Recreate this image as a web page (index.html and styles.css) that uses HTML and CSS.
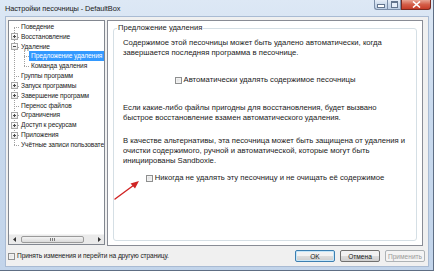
FILE: index.html
```html
<!DOCTYPE html>
<html lang="ru">
<head>
  <meta charset="UTF-8" />
  <title>Настройки песочницы - DefaultBox</title>
  <link rel="stylesheet" href="styles.css">
</head>
<body>
<div class="window">
  <div class="titlebar">
    <span class="title">Настройки песочницы - DefaultBox</span>
    <div class="controls">
      <span class="ctl ctl-min"><i class="min-glyph"></i></span>
      <span class="ctl ctl-max"><i class="max-glyph"></i></span>
      <span class="ctl ctl-close">
        <svg width="9" height="7" viewBox="0 0 9 7"><path d="M1 0.5 L8 6.5 M8 0.5 L1 6.5" stroke="#fff" stroke-width="1.6"/></svg>
      </span>
    </div>
  </div>

  <div class="client">
    <div class="main">
      <div class="tree">
        <ul class="tree-list">
          <li class="item"><span class="label">Поведение</span></li>
          <li class="item"><span class="exp plus"></span><span class="label">Восстановление</span></li>
          <li class="item"><span class="exp minus"></span><span class="label">Удаление</span></li>
          <li class="sub">
            <ul class="sub-list">
              <li class="item child"><span class="label selected">Предложение удаления</span></li>
              <li class="item child"><span class="label">Команда удаления</span></li>
            </ul>
          </li>
          <li class="item"><span class="label">Группы программ</span></li>
          <li class="item"><span class="exp plus"></span><span class="label">Запуск программы</span></li>
          <li class="item"><span class="exp plus"></span><span class="label">Завершение программ</span></li>
          <li class="item"><span class="label">Перенос файлов</span></li>
          <li class="item"><span class="exp plus"></span><span class="label">Ограничения</span></li>
          <li class="item"><span class="exp plus"></span><span class="label">Доступ к ресурсам</span></li>
          <li class="item"><span class="exp plus"></span><span class="label">Приложения</span></li>
          <li class="item"><span class="label">Учётные записи пользователей</span></li>
        </ul>
        <div class="hscroll">
          <span class="sb-btn"><svg width="3" height="5" viewBox="0 0 3 5"><path d="M3 0 L0 2.5 L3 5 Z" fill="#333"/></svg></span>
          <div class="sb-track"><span class="sb-thumb"><i></i><i></i><i></i></span></div>
          <span class="sb-btn"><svg width="3" height="5" viewBox="0 0 3 5"><path d="M0 0 L3 2.5 L0 5 Z" fill="#333"/></svg></span>
        </div>
      </div>

      <div class="page">
        <fieldset class="group">
          <legend>Предложение удаления</legend>
          <div class="group-body">
            <p class="text p1">Содержимое этой песочницы может быть удалено автоматически, когда<br>завершается последняя программа в песочнице.</p>
            <div class="check-row c1"><span class="box"></span>Автоматически удалять содержимое песочницы</div>
            <p class="text p2">Если какие-либо файлы пригодны для восстановления, будет вызвано<br>быстрое восстановление взамен автоматического удаления.</p>
            <p class="text p3">В качестве альтернативы, эта песочница может быть защищена от удаления и<br>очистки содержимого, ручной и автоматической, которые могут быть<br>инициированы Sandboxie.</p>
            <div class="check-row c2"><span class="box"></span>Никогда не удалять эту песочницу и не очищать её содержимое</div>
          </div>
        </fieldset>
      </div>
    </div>

    <div class="footer">
      <div class="check-row footer-check"><span class="box"></span>Принять изменения и перейти на другую страницу.</div>
      <div class="buttons">
        <button class="btn btn-default">OK</button>
        <button class="btn">Отмена</button>
        <button class="btn" disabled>Применить</button>
      </div>
    </div>
  </div>

  <svg class="arrow" width="30" height="24" viewBox="0 0 30 24">
    <path d="M1 22 L20 8" stroke="#d02424" stroke-width="1.4" stroke-linecap="round"/>
    <path d="M25 4 L16.5 6.5 L21 11.5 Z" fill="#d02424"/>
  </svg>
</div>
</body>
</html>
```

FILE: styles.css
```css
body {
  margin: 0;
  font-family: "Liberation Sans", Arial, sans-serif;
  background: #ffffff;
}

.window {
  width: 434px;
  height: 271px;
  box-sizing: border-box;
  position: relative;
  display: flex;
  flex-direction: column;
  background: linear-gradient(#dde8f5, #c9daee 40%, #c2d4ea);
  border-right: 1px solid #5e6e84;
  border-bottom: 1px solid #5e6e84;
}

.titlebar {
  height: 17px;
  display: flex;
  align-items: flex-start;
  justify-content: space-between;
  flex-shrink: 0;
}

.title {
  font-size: 7.4px;
  color: #1a1a1a;
  margin: 4px 0 0 5px;
  letter-spacing: -0.1px;
}

.controls {
  display: flex;
  margin-right: 2px;
}

.ctl {
  height: 10px;
  box-sizing: border-box;
  border: 1px solid #7b8ea8;
  border-top: none;
  display: flex;
  align-items: center;
  justify-content: center;
  background: linear-gradient(#e7eef7, #cbd9ea 50%, #bccde3);
}

.ctl-min {
  width: 13px;
  border-radius: 0 0 0 3px;
  border-right: none;
}

.ctl-max {
  width: 14px;
}

.ctl-close {
  width: 30px;
  border-color: #7a2a20;
  border-radius: 0 0 3px 0;
  background: linear-gradient(#e8a493, #d45e48 50%, #c63b27);
}

.min-glyph {
  width: 6px;
  height: 2px;
  margin-top: 3px;
  background: #fff;
  border: 1px solid #63758d;
}

.max-glyph {
  width: 5px;
  height: 4px;
  border: 1px solid #63758d;
  border-top-width: 2px;
  background: #e6eef8;
}

.client {
  flex: 1;
  margin: 0 5px 4px 6px;
  background: #f0f0f0;
  display: flex;
  flex-direction: column;
  box-shadow: 0 0 0 1px #a9bbd3;
}

.main {
  display: flex;
  align-items: flex-start;
  gap: 2px;
  padding: 3px 5px 0 2px;
}

/* tree */
.tree {
  width: 97px;
  height: 225px;
  box-sizing: border-box;
  border: 1px solid #828790;
  background: #fff;
  display: flex;
  flex-direction: column;
  overflow: hidden;
}

.tree-list {
  list-style: none;
  margin: 1px 0 0;
  padding: 0;
  flex: 1;
  position: relative;
  font-size: 6.6px;
  letter-spacing: -0.1px;
  color: #1a1a1a;
  white-space: nowrap;
}

.tree-list::before {
  content: "";
  position: absolute;
  left: 5px;
  top: 5px;
  height: 118px;
  border-left: 1px dotted #a0a0a0;
}

.sub-list {
  list-style: none;
  margin: 0;
  padding: 0;
  position: relative;
}

.sub-list::before {
  content: "";
  position: absolute;
  left: 15px;
  top: 0;
  height: 15px;
  border-left: 1px dotted #a0a0a0;
}

.item {
  height: 9.83px;
  display: flex;
  align-items: center;
  position: relative;
  padding-left: 10px;
}

.item::before {
  content: "";
  position: absolute;
  left: 5px;
  width: 5px;
  top: 50%;
  border-top: 1px dotted #a0a0a0;
}

.item.child {
  padding-left: 20px;
}

.item.child::before {
  left: 15px;
}

.label {
  padding: 0 2px;
  line-height: 9.83px;
}

.label.selected {
  background: #3399ff;
  color: #fff;
  padding-right: 2px;
}

.exp {
  position: absolute;
  left: 2px;
  top: 1.5px;
  width: 7px;
  height: 7px;
  box-sizing: border-box;
  border: 1px solid #a8a8a8;
  background: linear-gradient(#ffffff, #e6e6e6);
  z-index: 1;
}

.exp::before,
.plus::after {
  content: "";
  position: absolute;
  background: #4a4a4a;
}

.exp::before {
  left: 1px;
  top: 2px;
  width: 3px;
  height: 1px;
}

.plus::after {
  left: 2px;
  top: 1px;
  width: 1px;
  height: 3px;
}

.hscroll {
  height: 9px;
  display: flex;
  background: #eaeaea;
  border-top: 1px solid #f4f4f4;
  flex-shrink: 0;
}

.sb-btn {
  width: 10px;
  display: flex;
  align-items: center;
  justify-content: center;
}

.sb-track {
  flex: 1;
  padding: 1px 1px;
  display: flex;
}

.sb-thumb {
  width: 63px;
  margin-left: 1px;
  box-sizing: border-box;
  border: 1px solid #9a9a9a;
  border-radius: 2px;
  background: linear-gradient(#f3f3f3, #dadada);
  display: flex;
  justify-content: center;
  align-items: center;
  gap: 1px;
}

.sb-thumb i {
  width: 1px;
  height: 3px;
  background: #7a7a7a;
}

/* page */
.page {
  flex: 1;
  height: 226px;
  box-sizing: border-box;
  border: 1px solid #898c95;
  background: #fff;
  padding: 2px 5px 4px 5px;
}

.group {
  margin: 0;
  padding: 0;
  height: 100%;
  box-sizing: border-box;
  border: 1px solid #d5dfe5;
  border-radius: 3px;
}

.group legend {
  font-size: 7.6px;
  color: #1a1a1a;
  margin-left: 3px;
  padding: 0 1px;
  line-height: 10px;
}

.group-body {
  padding: 5px 0 0 9px;
  font-size: 7.7px;
  color: #1a1a1a;
}

.text {
  margin: 0;
  line-height: 10px;
  white-space: nowrap;
}

.check-row {
  display: flex;
  align-items: center;
  gap: 2px;
  line-height: 10px;
  white-space: nowrap;
}

.box {
  width: 7px;
  height: 7px;
  box-sizing: border-box;
  border: 1px solid #8e8f8f;
  background: linear-gradient(135deg, #dcdcdc, #f8f8f8);
  box-shadow: inset 0 0 0 1px #f2f2f2;
}

.c1 {
  justify-content: center;
  margin: 17px 9px 0 0;
}

.p2 {
  margin-top: 18px;
}

.p3 {
  margin-top: 13px;
}

.c2 {
  justify-content: center;
  margin: 7px 9px 0 0;
}

/* footer */
.footer {
  flex: 1;
  display: flex;
  align-items: center;
  justify-content: space-between;
  padding: 0 3px 0 2px;
}

.footer-check {
  font-size: 6.6px;
  letter-spacing: -0.1px;
  color: #1a1a1a;
  gap: 2px;
}

.buttons {
  display: flex;
  gap: 5px;
}

.btn {
  width: 40px;
  height: 12px;
  padding: 0;
  font-family: inherit;
  font-size: 6.6px;
  color: #1a1a1a;
  border: 1px solid #707070;
  border-radius: 2px;
  background: linear-gradient(#f2f2f2 50%, #dddddd 50%, #cfcfcf);
}

.btn-default {
  border-color: #3c7fb1;
  box-shadow: inset 0 0 0 1px #c6e6f8;
}

.btn:disabled {
  color: #9a9a9a;
  border-color: #adb2b5;
  background: #f4f4f4;
}

/* annotation arrow laid over the dialog */
.arrow {
  position: absolute;
  left: 114px;
  top: 177px;
}
```
